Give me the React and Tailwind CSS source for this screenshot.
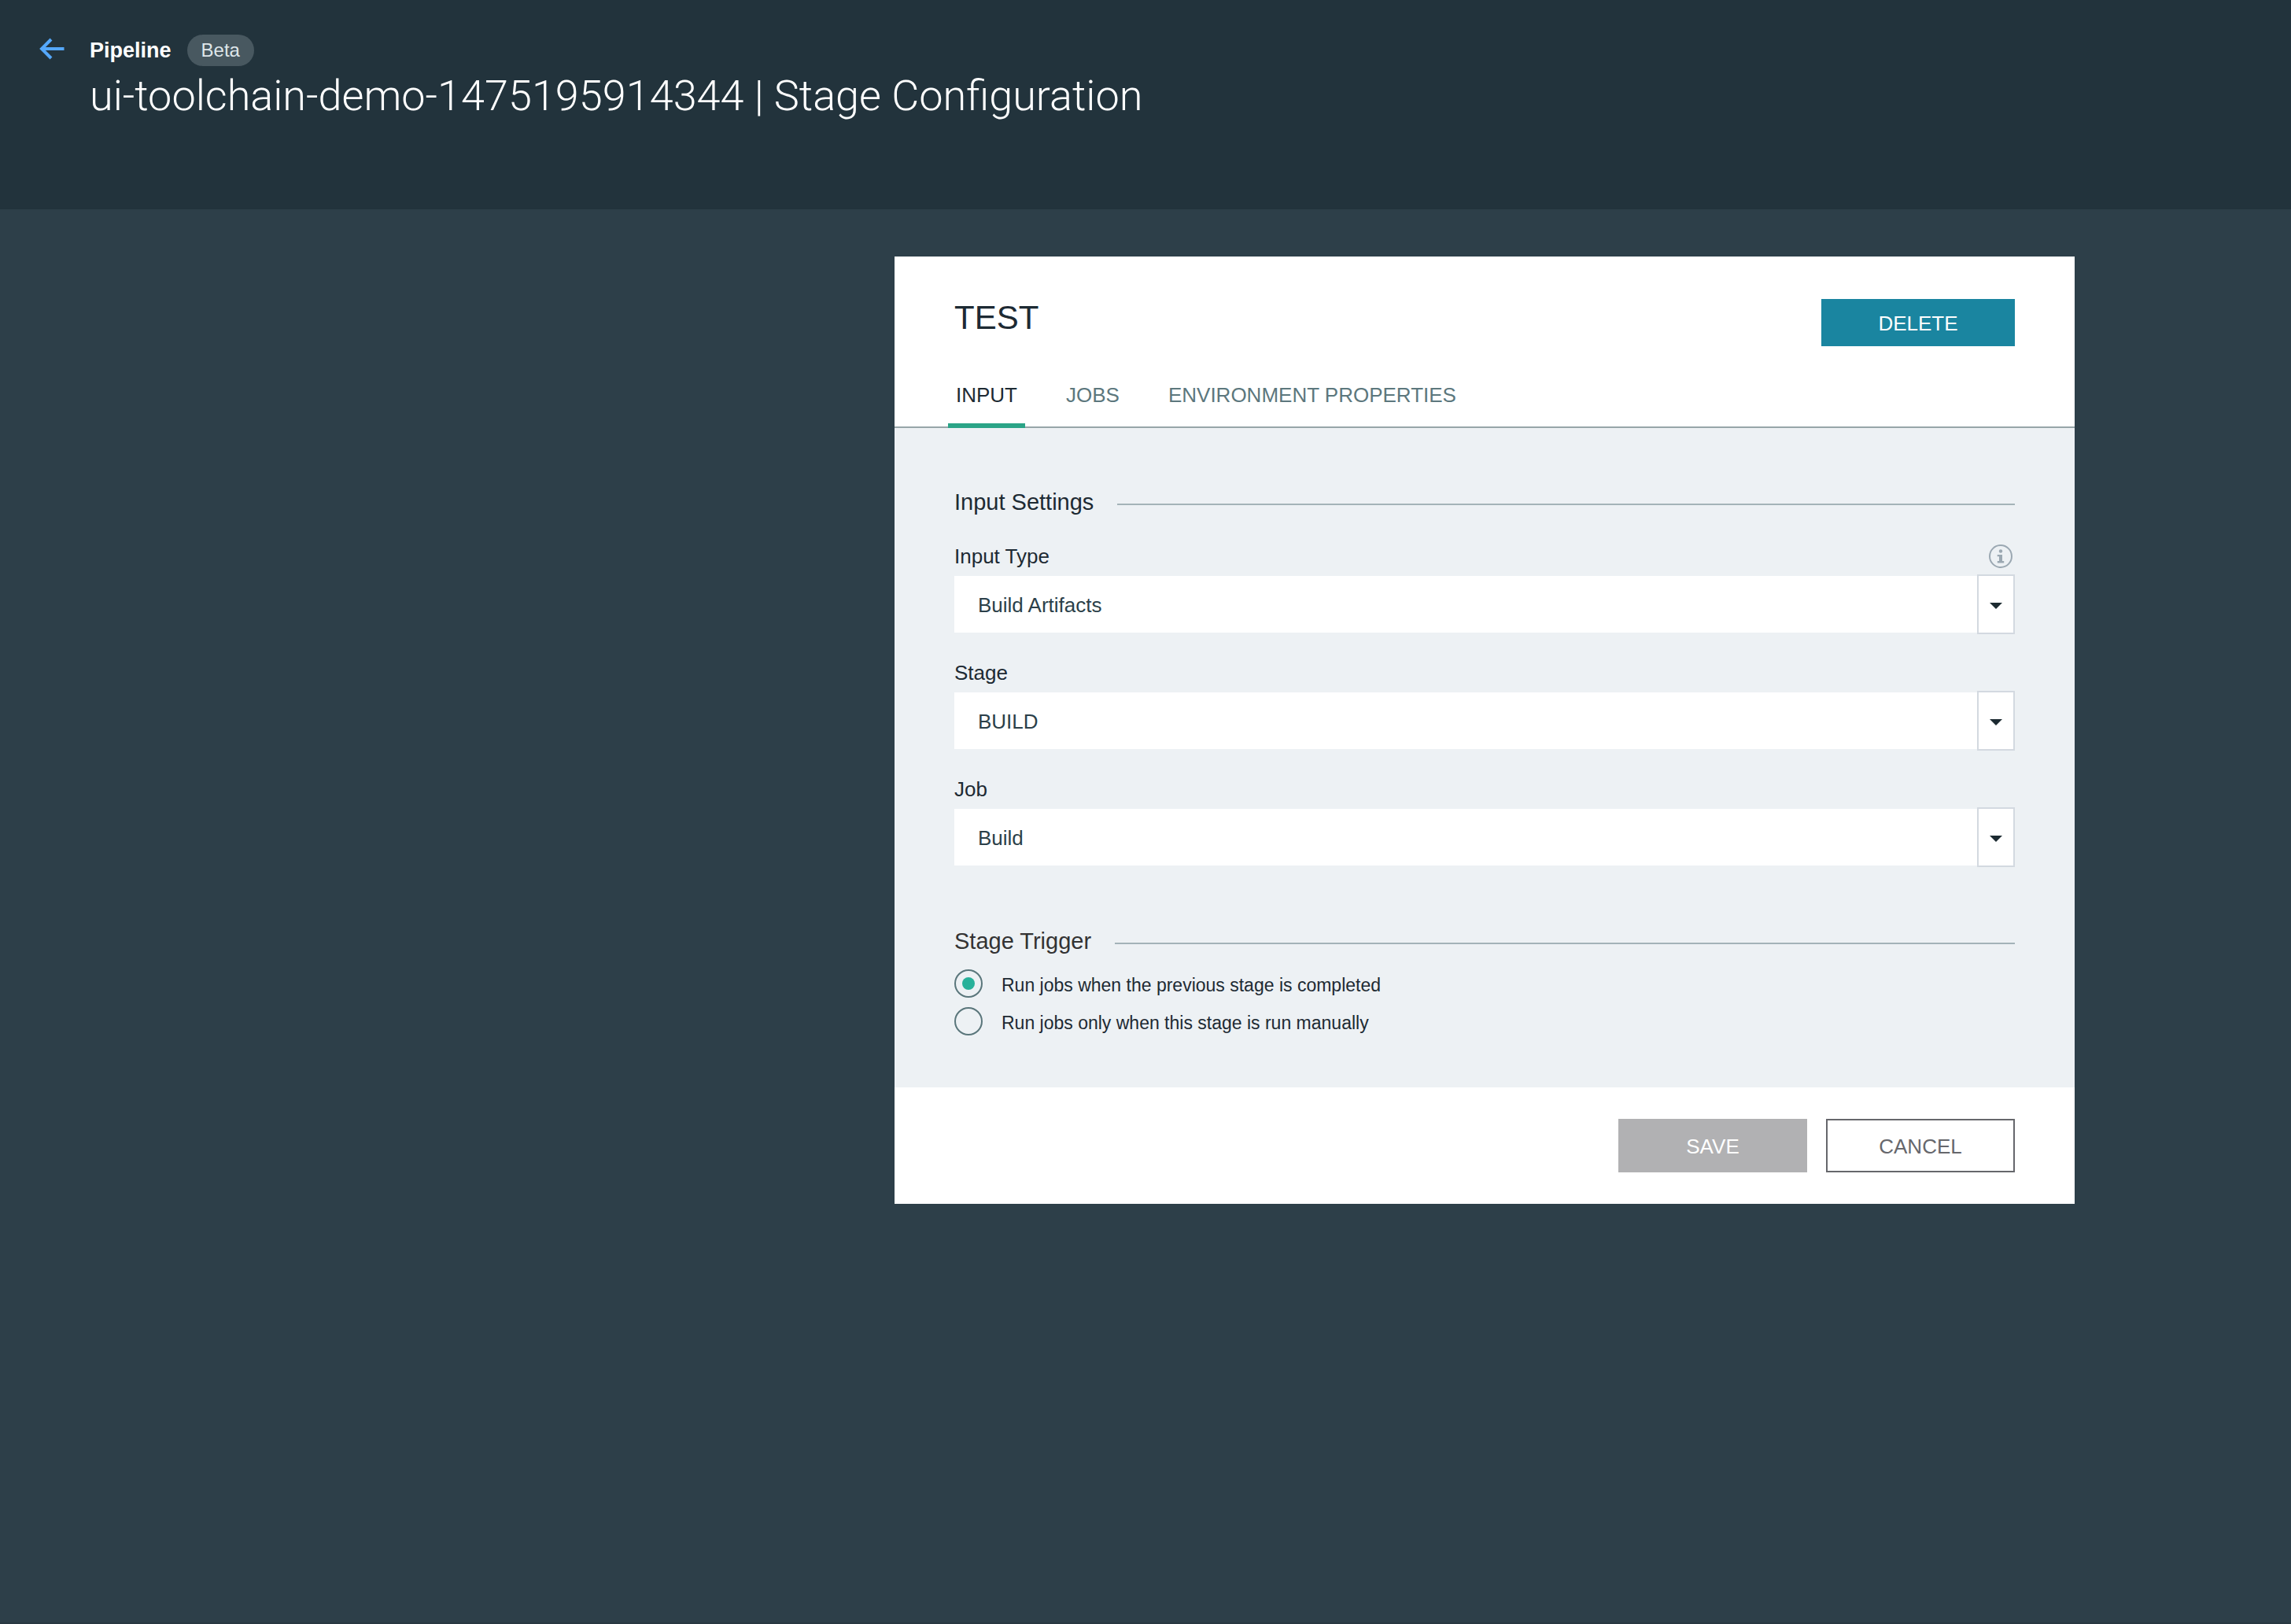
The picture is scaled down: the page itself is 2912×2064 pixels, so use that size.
import React, { useState } from "react";

const tabs = ["INPUT", "JOBS", "ENVIRONMENT PROPERTIES"];

const fields = [
  { id: "input-type", label: "Input Type", options: ["Build Artifacts"], info: true },
  { id: "stage", label: "Stage", options: ["BUILD"] },
  { id: "job", label: "Job", options: ["Build"] },
];

const triggers = [
  "Run jobs when the previous stage is completed",
  "Run jobs only when this stage is run manually",
];

function BackArrow() {
  return (
    <svg className="h-7 w-8" viewBox="0 0 32 28" fill="none" stroke="#55a8fb" strokeWidth="4" aria-hidden="true">
      <path d="M3 14H31.5M15 2L3 14L15 26" />
    </svg>
  );
}

function InfoIcon() {
  return (
    <svg className="size-[30px]" viewBox="0 0 30 30" aria-hidden="true">
      <circle cx="15" cy="15" r="14" fill="none" stroke="#9ba8b2" strokeWidth="2" />
      <circle cx="15" cy="8.5" r="2.2" fill="#9ba8b2" />
      <path d="M10.7 13H17V21H19.200V23.400H10.800V21H13V15.200H10.700Z" fill="#9ba8b2" />
    </svg>
  );
}

function SectionHeading({ children, color }) {
  return (
    <div className="flex items-end gap-[30px]">
      <h3 className={`text-[29px] leading-10 ${color}`}>{children}</h3>
      <span className="mb-4 h-0.5 flex-1 bg-[#a4b3b8]" />
    </div>
  );
}

function SelectField({ id, label, options, info }) {
  return (
    <div>
      <div className="mb-[7px] flex h-8 items-center justify-between pr-[3px]">
        <label htmlFor={id} className="text-[26px] leading-8 text-[#1d2a33]">{label}</label>
        {info && (
          <button type="button" aria-label="About input type">
            <InfoIcon />
          </button>
        )}
      </div>
      <div className="relative py-0.5">
        <select
          id={id}
          className="block h-[72px] w-full appearance-none rounded-none bg-white pt-0.5 pl-[30px] text-[26px] text-[#2b3f49] outline-none"
        >
          {options.map((o) => (
            <option key={o}>{o}</option>
          ))}
        </select>
        <span className="pointer-events-none absolute inset-y-0 right-0 flex w-12 items-center justify-center border-2 border-[#d3d9e0] bg-white pt-1">
          <svg className="h-2 w-4" viewBox="0 0 16 8" aria-hidden="true">
            <path d="M0 0H16L8 8Z" fill="#1c2a31" />
          </svg>
        </span>
      </div>
    </div>
  );
}

export default function App() {
  const [tab, setTab] = useState("INPUT");
  const [trigger, setTrigger] = useState(0);

  return (
    <div className="flex min-h-screen flex-col border-b-2 border-[#283841] bg-[#2d3f49] font-['Liberation_Sans',Arial,sans-serif]">
      <header className="flex min-h-[266px] items-start gap-8 bg-[#22333c] pt-11 pl-[50px]">
        <a href="#pipeline" aria-label="Back to pipeline" className="mt-1">
          <BackArrow />
        </a>
        <div>
          <div className="flex h-10 items-center gap-5">
            <span className="text-[27px] leading-9 font-bold text-white">Pipeline</span>
            <span className="rounded-full bg-[#485860] px-[18px] text-2xl leading-10 text-[#dfe6ea]">Beta</span>
          </div>
          <h1 className="font-['Roboto',sans-serif] text-[54px] leading-[76px] font-light text-white">
            ui-toolchain-demo-1475195914344 | Stage Configuration
          </h1>
        </div>
      </header>

      <main className="flex justify-end pt-[60px] pr-[275px]">
        <section className="w-full max-w-[1500px] bg-white">
          <div className="flex items-start justify-between px-[76px] pt-[54px]">
            <h2 className="text-[42px] leading-[48px] text-[#1d2a33]">TEST</h2>
            <button type="button" className="h-[60px] w-[246px] bg-[#1a85a0] pt-0.5 text-[26px] text-white">DELETE</button>
          </div>

          <nav role="tablist" className="mt-[46px] flex gap-[42px] border-b-2 border-[#97a6a9] px-[68px]">
            {tabs.map((t) => (
              <button
                key={t}
                type="button"
                role="tab"
                aria-selected={tab === t}
                onClick={() => setTab(t)}
                className={`-mb-0.5 border-b-[6px] px-2.5 pb-5 text-[26px] leading-8 ${
                  tab === t ? "border-[#2ba487] text-[#1d2a33]" : "border-transparent text-[#5c777d]"
                }`}
              >
                {t}
              </button>
            ))}
          </nav>

          <form>
            <div className="bg-[#edf1f4] px-[76px] pt-[74px] pb-[62px]">
              <SectionHeading color="text-[#1d2a33]">Input Settings</SectionHeading>
              <div className="mt-[33px] flex flex-col gap-[33px]">
                {fields.map((f) => (
                  <SelectField key={f.id} {...f} />
                ))}
              </div>

              <div className="mt-[74px]">
                <SectionHeading color="text-[#333333]">Stage Trigger</SectionHeading>
              </div>
              <div className="mt-4 flex flex-col gap-2">
                {triggers.map((t, i) => (
                  <label key={t} className="flex items-start gap-6 text-[23px] leading-10 text-[#1d2a33]">
                    <input
                      type="radio"
                      name="trigger"
                      checked={trigger === i}
                      onChange={() => setTrigger(i)}
                      className="grid size-9 appearance-none place-content-center rounded-full border-2 border-[#5a767b] before:size-4 before:rounded-full checked:before:bg-[#28b19a]"
                    />
                    {t}
                  </label>
                ))}
              </div>
            </div>

            <div className="flex justify-end gap-6 px-[76px] py-10">
              <button type="button" className="h-[68px] w-60 bg-[#b1b1b3] pt-0.5 text-[26px] text-white">SAVE</button>
              <button type="button" className="h-[68px] w-60 border-2 border-[#66676c] bg-white pt-0.5 text-[26px] text-[#66676c]">CANCEL</button>
            </div>
          </form>
        </section>
      </main>
    </div>
  );
}
